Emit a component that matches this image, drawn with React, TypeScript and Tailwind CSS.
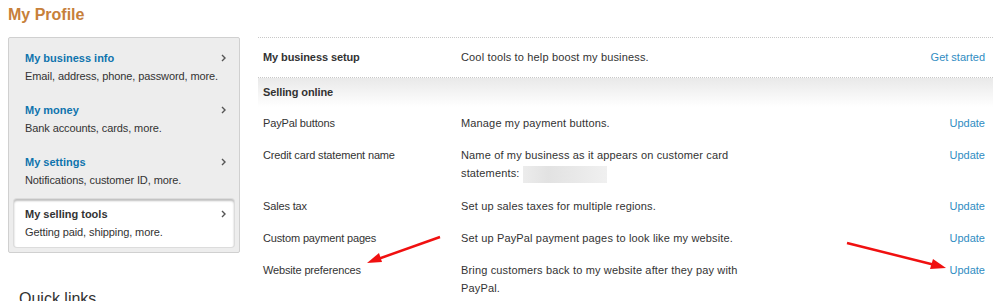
import React from 'react';

const navItems = [
  { title: 'My business info', desc: 'Email, address, phone, password, more.' },
  { title: 'My money', desc: 'Bank accounts, cards, more.' },
  { title: 'My settings', desc: 'Notifications, customer ID, more.' },
  { title: 'My selling tools', desc: 'Getting paid, shipping, more.', active: true },
];

const sellingRows: { label: string; desc: React.ReactNode }[] = [
  { label: 'PayPal buttons', desc: 'Manage my payment buttons.' },
  {
    label: 'Credit card statement name',
    desc: (
      <>
        Name of my business as it appears on customer card statements:{' '}
        <span className="inline-block align-middle w-[84px] h-[17px] bg-[linear-gradient(90deg,#ececec,#e2e2e2_30%,#e8e8e8_60%,#f0f0f0)]" />
      </>
    ),
  },
  { label: 'Sales tax', desc: 'Set up sales taxes for multiple regions.' },
  { label: 'Custom payment pages', desc: 'Set up PayPal payment pages to look like my website.' },
  { label: 'Website preferences', desc: 'Bring customers back to my website after they pay with PayPal.' },
];

function Chevron() {
  return (
    <svg width="5" height="8" viewBox="0 0 5 8" className="shrink-0">
      <path d="M1 1 L4 4 L1 7" fill="none" stroke="#555" strokeWidth="1.4" />
    </svg>
  );
}

export default function App() {
  return (
    <div className="relative w-[1000px] h-[301px] overflow-hidden bg-white text-[#333] font-['Liberation_Sans',Arial,sans-serif] text-[11px]">
      <div className="flex pl-[8px] pt-[4px]">
        {/* left column */}
        <div className="w-[232px] shrink-0">
          <h1 className="text-[16px] leading-[22px] font-bold text-[#c7803a] mb-[11px]">My Profile</h1>
          <div className="bg-[#ededed] border border-[#d0d0d0] rounded-[2px] px-[5px] pt-[5px] pb-[5px] flex flex-col gap-[4px]">
            {navItems.map((item) => (
              <div
                key={item.title}
                className={`h-[48px] pl-[11px] pr-[8px] pt-[8px] ${
                  item.active ? 'bg-white rounded-[3px] shadow-[inset_0_2px_2px_rgba(0,0,0,0.25),0_0_0_1px_#dcdcdc]' : ''
                }`}
              >
                <div className="flex items-center justify-between h-[14px]">
                  <span className={`text-[11px] font-bold ${item.active ? 'text-[#333]' : 'text-[#0f74ad]'}`}>
                    {item.title}
                  </span>
                  <Chevron />
                </div>
                <div className="mt-[4px] h-[14px] leading-[14px] tracking-[-0.1px]">{item.desc}</div>
              </div>
            ))}
          </div>
          <div className="mt-[36px] pl-[11px] text-[16px] leading-[20px] text-[#333]">Quick links</div>
        </div>

        {/* right column */}
        <div className="ml-[18px] w-[735px] pt-[33px]">
          <div className="border-t border-dotted border-[#c8c8c8]" />
          <div className="flex items-center h-[39px]">
            <div className="w-[203px] pl-[5px] font-bold tracking-[-0.1px]">My business setup</div>
            <div className="flex-1 tracking-[0.15px]">Cool tools to help boost my business.</div>
            <a className="pr-[8px] text-[#2f8cc2]">Get started</a>
          </div>
          <div className="border-t border-dotted border-[#c8c8c8]" />
          <div className="h-[29px] flex items-center pl-[5px] font-bold tracking-[-0.1px] bg-[linear-gradient(#e9e9e9,#ffffff)]">
            Selling online
          </div>
          {sellingRows.map((row) => (
            <div key={row.label} className="flex items-start py-[7px] leading-[18px]">
              <div className="w-[203px] pl-[5px] shrink-0 tracking-[-0.15px]">{row.label}</div>
              <div className="w-[290px] tracking-[0.15px]">{row.desc}</div>
              <div className="flex-1 text-right pr-[8px] text-[#2f8cc2]">Update</div>
            </div>
          ))}
        </div>
      </div>

      {/* annotation arrows */}
      <svg className="absolute inset-0 pointer-events-none" width="1000" height="301">
        <line x1="440" y1="237" x2="378" y2="259" stroke="#f01010" strokeWidth="2.5" />
        <polygon points="367,263 379,253 382,262" fill="#f01010" />
        <line x1="847" y1="243" x2="935" y2="265" stroke="#f01010" strokeWidth="2.5" />
        <polygon points="946,268 933,259 930,269" fill="#f01010" />
      </svg>
    </div>
  );
}
